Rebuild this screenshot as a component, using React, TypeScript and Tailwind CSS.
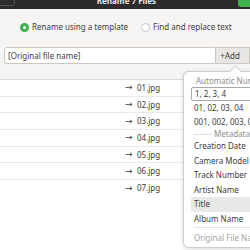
export default function App() {
  const rows = ["01", "02", "03", "04", "05", "06", "07"];
  const meta = ["Creation Date", "Camera Model", "Track Number", "Artist Name", "Title", "Album Name"];
  return (
    <div className="relative w-[250px] h-[250px] overflow-hidden bg-white text-[#3d3d3d] font-['Noto_Sans',sans-serif] text-[8px]">
      {/* header bar */}
      <div className="h-[9px] bg-[#2c2c2c] flex items-end justify-between overflow-hidden">
        <div className="w-[30px] h-[20px] ml-[-15px] mb-[3px] shrink-0 rounded-[3px] border border-[#525252]" />
        <span className="mb-[4px] leading-[8px] text-[#e8e8e8] font-bold whitespace-nowrap">Rename 7 Files</span>
        <div className="w-[16px] h-[20px] mr-[-4px] mb-[2px] shrink-0 rounded-[3px] bg-[#3eb34f]" />
      </div>
      {/* upper settings */}
      <div className="h-[71px] bg-[#f6f5f4] border-b border-[#dcdad8] flex flex-col">
        <div className="mt-[13px] h-[10px] flex items-center">
          <div className="ml-[20px] w-[9px] h-[9px] rounded-full bg-[#3eb34f] flex items-center justify-center shrink-0">
            <div className="w-[3px] h-[3px] rounded-full bg-white" />
          </div>
          <span className="ml-[3px] whitespace-nowrap">Rename using a template</span>
          <div className="ml-[13px] w-[9px] h-[9px] rounded-full bg-white border border-[#c8c4c0] shrink-0" />
          <span className="ml-[3px] whitespace-nowrap">Find and replace text</span>
        </div>
        <div className="mt-[15px] ml-[4px] h-[17px] flex">
          <div className="w-[215px] h-full bg-white border border-[#cdc7c2] rounded-l-[3px] flex items-center pl-[3px] whitespace-nowrap">
            [Original file name]
          </div>
          <div className="w-[34px] h-full bg-[#e9e7e5] border border-l-0 border-[#cdc7c2] flex items-center pl-[4px] whitespace-nowrap text-[#3d3d3d]">
            +Add
          </div>
        </div>
      </div>
      {/* list */}
      <div className="flex flex-col">
        {rows.map((r, i) => (
          <div
            key={r}
            className={`h-[16.7px] flex items-center pl-[125px] whitespace-nowrap ${i < 6 ? "border-b border-[#e9e9e9]" : ""}`}
          >
            <span className="w-[12px] text-[9px] font-['DejaVu_Sans',sans-serif] leading-none">→</span>
            <span>{r}.jpg</span>
          </div>
        ))}
      </div>
      {/* popover */}
      <div className="absolute left-[183px] top-[71px] w-[98px] h-[177px] bg-white border border-[#cfcdcb] rounded-[6px] shadow-[0_1px_4px_rgba(0,0,0,0.15)] pt-[3px]">
        <div className="absolute left-[47px] top-[-5px] w-[9px] h-[9px] rotate-45 bg-white border-l border-t border-[#cfcdcb]" />
        <div className="relative flex flex-col">
          <div className="h-[12px] mx-[10px] flex items-center gap-[2px] text-[#8e8e8e]">
            <div className="flex-1 h-px bg-[#e2e2e2]" />
            <span className="whitespace-nowrap">Automatic Numbers</span>
            <div className="flex-1 h-px bg-[#e2e2e2]" />
          </div>
          <div className="h-[14px] mx-[7px] pl-[3px] flex items-center border border-[#a9a9a9] rounded-[2px] whitespace-nowrap">1, 2, 3, 4</div>
          <div className="h-[14px] mx-[7px] pl-[3px] flex items-center whitespace-nowrap">01, 02, 03, 04</div>
          <div className="h-[14px] mx-[7px] pl-[3px] flex items-center whitespace-nowrap">001, 002, 003, 0004</div>
          <div className="h-[10px] mx-[10px] flex items-center gap-[2px] text-[#8e8e8e]">
            <div className="flex-1 h-px bg-[#e2e2e2]" />
            <span className="whitespace-nowrap">Metadata</span>
            <div className="flex-1 h-px bg-[#e2e2e2]" />
          </div>
          {meta.map((m) => (
            <div
              key={m}
              className={`h-[14.5px] mx-[7px] pl-[3px] flex items-center whitespace-nowrap rounded-[2px] ${m === "Title" ? "bg-[#e8e8e7]" : ""}`}
            >
              {m}
            </div>
          ))}
          <div className="mx-[10px] mt-[1px] h-px bg-[#e4e4e4]" />
          <div className="mt-[3px] h-[14px] mx-[7px] pl-[3px] flex items-center whitespace-nowrap text-[#a3a3a3]">Original File Name</div>
        </div>
      </div>
    </div>
  );
}
